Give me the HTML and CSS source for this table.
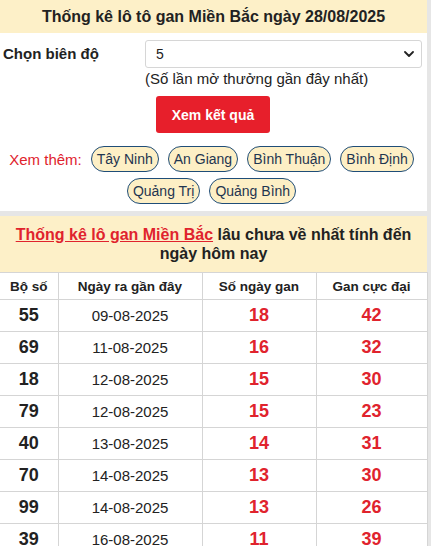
FILE: index.html
```html
<!DOCTYPE html>
<html lang="vi">
<head>
<meta charset="utf-8">
<link rel="stylesheet" href="styles.css">
</head>
<body>
<div class="page">
  <section class="card">
    <h1 class="title">Thống kê lô tô gan Miền Bắc ngày 28/08/2025</h1>
    <div class="form">
      <div class="form-row">
        <label class="form-label">Chọn biên độ</label>
        <div class="form-field">
          <div class="select"><span>5</span>
            <svg class="chev" viewBox="0 0 10 6" width="10" height="6"><path d="M1 1l4 4 4-4" fill="none" stroke="#222" stroke-width="1.8" stroke-linecap="round" stroke-linejoin="round"/></svg>
          </div>
          <div class="hint">(Số lần mở thưởng gần đây nhất)</div>
          <div class="btn">Xem kết quả</div>
        </div>
      </div>
    </div>
    <div class="more">
      <span class="more-label">Xem thêm:</span>
      <span class="pill">Tây Ninh</span>
      <span class="pill">An Giang</span>
      <span class="pill">Bình Thuận</span>
      <span class="pill">Bình Định</span>
      <span class="pill">Quảng Trị</span>
      <span class="pill">Quảng Bình</span>
    </div>
  </section>
  <section class="card card-2">
    <h2 class="subtitle"><a class="sublink">Thống kê lô gan Miền Bắc</a> lâu chưa về nhất tính đến ngày hôm nay</h2>
    <table class="tbl">
      <colgroup><col class="c1"><col class="c2"><col class="c3"><col class="c4"></colgroup>
      <thead>
        <tr><th>Bộ số</th><th>Ngày ra gần đây</th><th>Số ngày gan</th><th>Gan cực đại</th></tr>
      </thead>
      <tbody>
        <tr><td class="num">55</td><td class="date">09-08-2025</td><td class="red">18</td><td class="red">42</td></tr>
        <tr><td class="num">69</td><td class="date">11-08-2025</td><td class="red">16</td><td class="red">32</td></tr>
        <tr><td class="num">18</td><td class="date">12-08-2025</td><td class="red">15</td><td class="red">30</td></tr>
        <tr><td class="num">79</td><td class="date">12-08-2025</td><td class="red">15</td><td class="red">23</td></tr>
        <tr><td class="num">40</td><td class="date">13-08-2025</td><td class="red">14</td><td class="red">31</td></tr>
        <tr><td class="num">70</td><td class="date">14-08-2025</td><td class="red">13</td><td class="red">30</td></tr>
        <tr><td class="num">99</td><td class="date">14-08-2025</td><td class="red">13</td><td class="red">26</td></tr>
        <tr><td class="num">39</td><td class="date">16-08-2025</td><td class="red">11</td><td class="red">39</td></tr>
      </tbody>
    </table>
  </section>
</div>
</body>
</html>
```
FILE: styles.css
```css
* { box-sizing: border-box; }
html, body { margin: 0; padding: 0; }
body {
  background: #e6e6e6;
  font-family: "Liberation Sans", Arial, sans-serif;
  color: #222;
}
.page { width: 427px; }
.card { background: #fff; }
.card-2 { margin-top: 5px; }
.title {
  margin: 0;
  height: 33px;
  background: #fdf0c8;
  font-size: 16px;
  font-weight: bold;
  text-align: center;
  line-height: 33px;
}
.form { padding: 7px 5px 0 3px; }
.form-row { display: flex; }
.form-label {
  width: 142px;
  font-weight: bold;
  font-size: 15px;
  padding-top: 5px;
}
.form-field { flex: 1; }
.select {
  height: 28px;
  border: 1px solid #d6d6d6;
  border-radius: 3px;
  display: flex;
  align-items: center;
  justify-content: space-between;
  padding: 0 7px 0 10px;
  font-size: 14px;
}
.hint { font-size: 15px; margin-top: 1px; line-height: 19px; }
.btn {
  margin: 8px 0 0 11px;
  width: 114px;
  height: 37px;
  background: #e71f2b;
  color: #fff;
  border-radius: 3px;
  font-weight: bold;
  font-size: 14px;
  display: flex;
  align-items: center;
  justify-content: center;
}
.more {
  display: flex;
  flex-wrap: wrap;
  justify-content: center;
  align-items: center;
  column-gap: 9px;
  row-gap: 6px;
  padding: 13px 12px 7px 8px;
  font-size: 14px;
}
.more-label { color: #e0232d; font-size: 15px; }
.pill {
  display: block;
  line-height: 24px;
  padding: 0 5px;
  border: 1.5px solid #1f4d78;
  border-radius: 14px;
  background: #fdefc5;
  color: #1f3550;
}
.subtitle {
  margin: 0;
  background: #fdf0c8;
  font-size: 16px;
  font-weight: bold;
  text-align: center;
  line-height: 19px;
  padding: 9px 6px;
  height: 56px;
}
.sublink { color: #e0232d; text-decoration: underline; }
.tbl {
  width: 427px;
  border-collapse: collapse;
  table-layout: fixed;
}
.c1 { width: 58px; }
.c2 { width: 144px; }
.c3 { width: 114px; }
.c4 { width: 111px; }
.tbl th, .tbl td {
  border: 1px solid #d5d5d5;
  text-align: center;
  padding: 0;
}
.tbl tr > :first-child { border-left: none; }
.tbl th {
  height: 27px;
  font-size: 13.5px;
  font-weight: bold;
}
.tbl td { height: 32px; }
.num { font-weight: bold; font-size: 18px; }
.date { font-size: 15px; }
.red { color: #e0232d; font-weight: bold; font-size: 18px; }
```
